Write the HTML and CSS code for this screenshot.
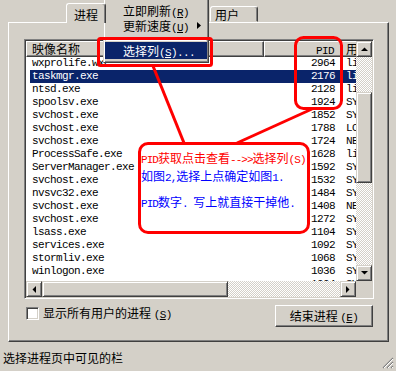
FILE: index.html
```html
<!DOCTYPE html>
<html>
<head>
<meta charset="utf-8">
<link rel="stylesheet" href="styles.css">
</head>
<body>
<div class="win">
  <div class="tabs">
    <div class="tab sel">进程</div>
    <div class="tab-gap"></div>
    <div class="tab user">用户</div>
  </div>
  <div class="page">
    <div class="list">
      <div class="view">
        <div class="hdr">
          <div class="hc c1">映像名称</div>
          <div class="hc c2"><span class="a">PID</span></div>
          <div class="hc c3">用户名</div>
        </div>
        <div class="rows">
          <div class="row"><span class="c1">wxprolife.wxe</span><span class="c2">2964</span><span class="c3">lijian</span></div>
          <div class="row sel"><span class="c1">taskmgr.exe</span><span class="c2">2176</span><span class="c3">lijian</span></div>
          <div class="row"><span class="c1">ntsd.exe</span><span class="c2">2128</span><span class="c3">lijian</span></div>
          <div class="row"><span class="c1">spoolsv.exe</span><span class="c2">1924</span><span class="c3">SYSTEM</span></div>
          <div class="row"><span class="c1">svchost.exe</span><span class="c2">1852</span><span class="c3">SYSTEM</span></div>
          <div class="row"><span class="c1">svchost.exe</span><span class="c2">1788</span><span class="c3">LOCAL SERVICE</span></div>
          <div class="row"><span class="c1">svchost.exe</span><span class="c2">1724</span><span class="c3">NETWORK SERVICE</span></div>
          <div class="row"><span class="c1">ProcessSafe.exe</span><span class="c2">1628</span><span class="c3">lijian</span></div>
          <div class="row"><span class="c1">ServerManager.exe</span><span class="c2">1592</span><span class="c3">SYSTEM</span></div>
          <div class="row"><span class="c1">svchost.exe</span><span class="c2">1532</span><span class="c3">SYSTEM</span></div>
          <div class="row"><span class="c1">nvsvc32.exe</span><span class="c2">1484</span><span class="c3">SYSTEM</span></div>
          <div class="row"><span class="c1">svchost.exe</span><span class="c2">1408</span><span class="c3">NETWORK SERVICE</span></div>
          <div class="row"><span class="c1">svchost.exe</span><span class="c2">1272</span><span class="c3">SYSTEM</span></div>
          <div class="row"><span class="c1">lsass.exe</span><span class="c2">1104</span><span class="c3">SYSTEM</span></div>
          <div class="row"><span class="c1">services.exe</span><span class="c2">1092</span><span class="c3">SYSTEM</span></div>
          <div class="row"><span class="c1">stormliv.exe</span><span class="c2">1068</span><span class="c3">SYSTEM</span></div>
          <div class="row"><span class="c1">winlogon.exe</span><span class="c2">1036</span><span class="c3">SYSTEM</span></div>
          <div class="row"><span class="c1">csrss.exe</span><span class="c2">1004</span><span class="c3">SYSTEM</span></div>
        </div>
      </div>
      <div class="vscroll">
        <div class="sbtn"><svg width="7" height="4" viewBox="0 0 7 4"><polygon points="0,4 7,4 3.5,0.5" fill="#000"/></svg></div>
        <div class="track vtop"></div>
        <div class="thumb vthumb"></div>
        <div class="track fill"></div>
        <div class="sbtn"><svg width="7" height="4" viewBox="0 0 7 4"><polygon points="0,0 7,0 3.5,3.5" fill="#000"/></svg></div>
      </div>
      <div class="hscroll">
        <div class="sbtn"><svg width="4" height="7" viewBox="0 0 4 7"><polygon points="4,0 4,7 0.5,3.5" fill="#000"/></svg></div>
        <div class="thumb hthumb"></div>
        <div class="track fill"></div>
        <div class="sbtn"><svg width="4" height="7" viewBox="0 0 4 7"><polygon points="0,0 0,7 3.5,3.5" fill="#000"/></svg></div>
      </div>
      <div class="corner"></div>
    </div>
    <div class="controls">
      <div class="chk"><span class="box"></span><span>显示所有用户的进程 <span class="a">(<u>S</u>)</span></span></div>
      <div class="btn">结束进程 <span class="a">(<u>E</u>)</span></div>
    </div>
  </div>
  <div class="status">选择进程页中可见的栏
    <svg class="grip" width="12" height="12" viewBox="0 0 12 12">
      <path d="M11 1 L1 11 M11 5 L5 11 M11 9 L9 11" stroke="#808080" stroke-width="1.2"/>
      <path d="M11 2 L2 11 M11 6 L6 11 M11 10 L10 11" stroke="#fff" stroke-width="1"/>
    </svg>
  </div>

  <div class="menu">
    <div class="mi">立即刷新<span class="a">(<u>R</u>)</span></div>
    <div class="mi">更新速度<span class="a">(<u>U</u>)</span><svg class="sub" width="4" height="7" viewBox="0 0 4 7"><polygon points="0,0 0,7 4,3.5" fill="#000"/></svg></div>
    <div class="msep"></div>
    <div class="mi hi">选择列<span class="a">(<u>S</u>)...</span></div>
  </div>

  <svg class="marks" width="396" height="371" viewBox="0 0 396 371">
    <rect x="98.5" y="38.5" width="113" height="27" rx="2" fill="none" stroke="#ff0000" stroke-width="3"/>
    <rect x="295.5" y="37.5" width="46" height="71" rx="8" fill="none" stroke="#ff0000" stroke-width="3"/>
    <line x1="153" y1="66" x2="184" y2="143" stroke="#ff0000" stroke-width="3"/>
    <line x1="237" y1="143" x2="312" y2="109" stroke="#ff0000" stroke-width="3"/>
  </svg>

  <div class="note">
    <div class="red"><span class="a">PID</span>获取点击查看<span class="a">--&gt;&gt;</span>选择列<span class="a">(S)</span></div>
    <div class="blue">如图<span class="a">2,</span>选择上点确定如图<span class="a">1.</span></div>
    <div class="blue gap"><span class="a">PID</span>数字<span class="a">. </span>写上就直接干掉他<span class="a">.</span></div>
  </div>
</div>
</body>
</html>
```

FILE: styles.css
```css
* { box-sizing: border-box; }
html, body { margin: 0; padding: 0; }
body {
  background: #d4d0c8;
  color: #000;
  font-family: "Noto Sans CJK SC", sans-serif;
  font-size: 12px;
  line-height: 14px;
}
.a {
  font-family: "Liberation Mono", monospace;
  font-size: 11px;
  letter-spacing: -0.6px;
}
.win {
  position: relative;
  width: 396px;
  height: 371px;
  overflow: hidden;
}

/* tabs */
.tabs {
  height: 22px;
  display: flex;
  align-items: flex-end;
  padding-left: 66px;
}
.tab {
  border: 1px solid;
  border-color: #fff #404040 transparent #fff;
  box-shadow: inset -1px 0 #808080;
  border-radius: 3px 3px 0 0;
  background: #d4d0c8;
}
.tab.sel {
  width: 40px;
  height: 20px;
  margin-bottom: -1px;
  position: relative;
  z-index: 1;
  text-align: center;
  padding-top: 4px;
  border-bottom: none;
}
.tab-gap { width: 104px; }
.tab.user {
  width: 48px;
  height: 16px;
  padding: 1px 0 0 4px;
}

/* page */
.page {
  margin-left: 8px;
  width: 381px;
  height: 320px;
  border-top: 1px solid #fff;
  border-left: 1px solid #fff;
  border-right: 1px solid #404040;
  border-bottom: 1px solid #404040;
  box-shadow: inset -1px -1px #808080;
  padding: 16px 0 0 15px;
}

/* list view */
.list {
  width: 350px;
  height: 260px;
  border: 1px solid;
  border-color: #808080 #fff #fff #808080;
  box-shadow: inset 1px 1px #404040, inset -1px -1px #d4d0c8;
  padding: 1px;
  background: #fff;
  display: grid;
  grid-template-columns: 330px 16px;
  grid-template-rows: 240px 16px;
}
.view {
  overflow: hidden;
  background: #fff;
}
.hdr {
  display: flex;
  height: 16px;
  overflow: hidden;
}
.hc {
  flex: none;
  height: 16px;
  border: 1px solid;
  border-color: #fff #404040 #404040 #fff;
  box-shadow: inset -1px -1px #808080;
  background: #d4d0c8;
  line-height: 14px;
  white-space: nowrap;
  overflow: hidden;
}
.hc.c1 { width: 238px; padding-left: 5px; }
.hc.c2 { width: 78px; text-align: right; padding-right: 7px; }
.hc.c3 { width: 80px; padding-left: 3px; }

.rows { padding-left: 4px; }
.row {
  display: flex;
  height: 13px;
  line-height: 13px;
  font-family: "Liberation Mono", monospace;
  font-size: 11px;
  letter-spacing: -0.6px;
  white-space: nowrap;
}
.row span { flex: none; overflow: hidden; }
.row .c1 { width: 234px; padding-left: 2px; }
.row .c2 { width: 78px; text-align: right; padding-right: 7px; }
.row .c3 { width: 80px; padding-left: 4px; }
.row.sel { background: #0a246a; color: #fff; }

/* scrollbars */
.sbtn, .thumb {
  background: #d4d0c8;
  border: 1px solid;
  border-color: #d4d0c8 #404040 #404040 #d4d0c8;
  box-shadow: inset 1px 1px #fff, inset -1px -1px #808080;
}
.sbtn {
  flex: none;
  width: 16px;
  height: 16px;
  display: flex;
  align-items: center;
  justify-content: center;
}
.sbtn svg { display: block; }
.track {
  background: repeating-conic-gradient(#fff 0 25%, #d4d0c8 0 50%) 0 0 / 2px 2px;
}
.vscroll {
  display: flex;
  flex-direction: column;
}
.vtop { height: 35px; flex: none; }
.vthumb { height: 91px; flex: none; }
.fill { flex: 1; }
.hscroll { display: flex; }
.hthumb { width: 186px; flex: none; }
.corner { background: #d4d0c8; }

/* controls */
.controls {
  width: 349px;
  margin-top: 6px;
  height: 22px;
  display: flex;
  justify-content: space-between;
  align-items: flex-start;
}
.chk {
  display: flex;
  align-items: center;
  gap: 4px;
  padding-left: 2px;
  margin-top: 2px;
  height: 13px;
}
.box {
  width: 13px;
  height: 13px;
  background: #fff;
  border: 1px solid;
  border-color: #808080 #fff #fff #808080;
  box-shadow: inset 1px 1px #404040, inset -1px -1px #d4d0c8;
}
.btn {
  width: 98px;
  height: 22px;
  border: 1px solid;
  border-color: #fff #404040 #404040 #fff;
  box-shadow: inset -1px -1px #808080;
  text-align: center;
  line-height: 19px;
}

/* status bar */
.status {
  position: relative;
  height: 29px;
  padding: 8px 0 0 3px;
  line-height: 16px;
}
.grip {
  position: absolute;
  right: 2px;
  bottom: 2px;
}

/* popup menu */
.menu {
  position: absolute;
  left: 103px;
  top: -3px;
  width: 106px;
  border: 1px solid;
  border-color: #d4d0c8 #404040 #404040 #d4d0c8;
  box-shadow: inset 1px 1px #fff, inset -1px -1px #808080;
  background: #d4d0c8;
  padding: 5px 1px 3px;
}
.mi {
  position: relative;
  height: 15px;
  line-height: 15px;
  padding-left: 18px;
  white-space: nowrap;
}
.mi.hi {
  height: 17px;
  line-height: 17px;
  background: #0a246a;
  color: #fff;
}
.sub {
  position: absolute;
  left: 92px;
  top: 4px;
}
.msep {
  height: 9px;
  margin: 0 1px;
  position: relative;
}
.msep::after {
  content: "";
  position: absolute;
  left: 0;
  right: 0;
  top: 6px;
  height: 1px;
  background: #808080;
  border-bottom: 1px solid #fff;
  box-sizing: content-box;
}

/* annotations */
.marks {
  position: absolute;
  left: 0;
  top: 0;
  pointer-events: none;
}
.note {
  position: absolute;
  left: 138px;
  top: 142px;
  width: 172px;
  height: 92px;
  border: 3px solid #ff0000;
  border-radius: 10px;
  background: #fff;
  padding: 5px 0 0 0;
  line-height: 15px;
  white-space: nowrap;
}
.note .a { letter-spacing: -0.95px; }
.red { color: #ff0000; }
.blue { color: #0000ff; }
.gap { margin-top: 8px; }
```
